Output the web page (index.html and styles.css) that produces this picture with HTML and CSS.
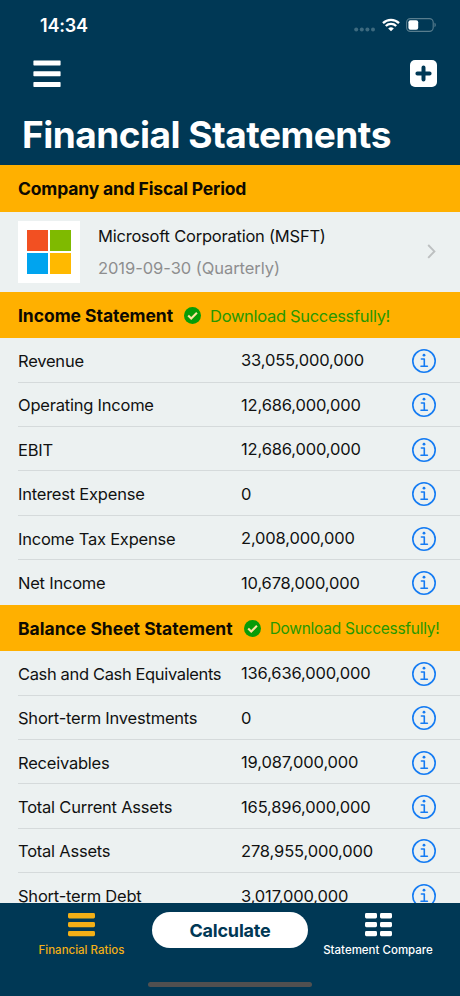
FILE: index.html
```html
<!DOCTYPE html>
<html lang="en">
<head>
    <meta charset="UTF-8">
    <meta name="viewport" content="width=device-width, initial-scale=1.0">
    <title>Financial Statements</title>
    <link rel="stylesheet" href="styles.css">
</head>
<body>
    <svg class="sprite">
        <symbol id="info" viewBox="0 0 24 24">
            <circle cx="12" cy="12" r="11.2" fill="none" stroke="currentColor" stroke-width="1.6"/>
            <circle cx="12" cy="6.2" r="1.4" fill="currentColor"/>
            <path d="M9.4 10h2.9v7.2M9 17.2h6.4" fill="none" stroke="currentColor" stroke-width="1.6" stroke-linecap="round" stroke-linejoin="round"/>
        </symbol>
        <symbol id="check" viewBox="0 0 17 17">
            <circle cx="8.5" cy="8.5" r="8.5" fill="#079c07"/>
            <path d="M4.2 8.6l3 3 5.7-5.8" fill="none" stroke="#ffe3a0" stroke-width="2.1"/>
        </symbol>
    </svg>

    <div class="app">
        <header>
            <div class="status-bar">
                <span class="time">14:34</span>
                <div class="status-icons">
                    <svg class="dots" width="22" height="5" viewBox="0 0 22 5" fill="#3d6a7f"><circle cx="2.2" cy="2.5" r="2"/><circle cx="7.8" cy="2.5" r="2"/><circle cx="13.4" cy="2.5" r="2"/><circle cx="19" cy="2.5" r="2"/></svg>
                    <svg class="wifi" width="18" height="14" viewBox="0 0 18 14" fill="none" stroke="#fff" stroke-width="2.3"><path d="M1 5.1a11.4 11.4 0 0 1 16 0M3.8 8a7.4 7.4 0 0 1 10.4 0"/><path d="M9 13.3L6.2 10.5a4 4 0 0 1 5.6 0z" fill="#fff" stroke="none"/></svg>
                    <svg class="battery" width="31" height="14" viewBox="0 0 31 14"><rect x=".6" y=".6" width="26.6" height="12.8" rx="3.8" fill="none" stroke="#587d8e" stroke-width="1.1"/><rect x="2.4" y="2.3" width="9.8" height="9.4" rx="2" fill="#fff"/><path d="M28.5 4.8c1.7.6 1.7 3.8 0 4.4z" fill="#587d8e"/></svg>
                </div>
            </div>
            <div class="toolbar">
                <svg width="28" height="28" viewBox="0 0 28 28" fill="#fff"><rect x=".4" y=".4" width="27.2" height="5" rx=".7"/><rect x=".4" y="11.2" width="27.2" height="5" rx=".7"/><rect x=".4" y="22" width="27.2" height="5" rx=".7"/></svg>
                <svg width="27" height="27" viewBox="0 0 27 27"><rect width="27" height="27" rx="5" fill="#fff"/><path d="M13.5 7.4v12.2M7.4 13.5h12.2" stroke="#003855" stroke-width="4" stroke-linecap="round"/></svg>
            </div>
            <h1>Financial Statements</h1>
        </header>

        <main>
            <div class="section-title"><h2 class="period">Company and Fiscal Period</h2></div>
            <div class="company">
                <div class="logo">
                    <svg width="44" height="44" viewBox="0 0 44 44"><path fill="#f25022" d="M0 0h21v21H0z"/><path fill="#7fba00" d="M23 0h21v21H23z"/><path fill="#00a4ef" d="M0 23h21v21H0z"/><path fill="#ffb900" d="M23 23h21v21H23z"/></svg>
                </div>
                <div class="company-info">
                    <p class="company-name">Microsoft Corporation (MSFT)</p>
                    <p class="company-date">2019-09-30 (Quarterly)</p>
                </div>
                <svg class="chevron" width="9" height="15" viewBox="0 0 9 15"><path d="M1.2 1l6.2 6.4L1.2 13.8" fill="none" stroke="#bdc0c1" stroke-width="1.9"/></svg>
            </div>

            <div class="section-title">
                <h2>Income Statement</h2>
                <svg class="check"><use href="#check"/></svg>
                <span class="status large">Download Successfully!</span>
            </div>
            <ul>
                <li><span class="name">Revenue</span><span class="value">33,055,000,000</span><svg class="info"><use href="#info"/></svg></li>
                <li><span class="name">Operating Income</span><span class="value">12,686,000,000</span><svg class="info"><use href="#info"/></svg></li>
                <li><span class="name">EBIT</span><span class="value">12,686,000,000</span><svg class="info"><use href="#info"/></svg></li>
                <li><span class="name">Interest Expense</span><span class="value">0</span><svg class="info"><use href="#info"/></svg></li>
                <li><span class="name">Income Tax Expense</span><span class="value">2,008,000,000</span><svg class="info"><use href="#info"/></svg></li>
                <li><span class="name">Net Income</span><span class="value">10,678,000,000</span><svg class="info"><use href="#info"/></svg></li>
            </ul>

            <div class="section-title balance">
                <h2>Balance Sheet Statement</h2>
                <svg class="check"><use href="#check"/></svg>
                <span class="status">Download Successfully!</span>
            </div>
            <ul>
                <li><span class="name long">Cash and Cash Equivalents</span><span class="value">136,636,000,000</span><svg class="info"><use href="#info"/></svg></li>
                <li><span class="name">Short-term Investments</span><span class="value">0</span><svg class="info"><use href="#info"/></svg></li>
                <li><span class="name">Receivables</span><span class="value">19,087,000,000</span><svg class="info"><use href="#info"/></svg></li>
                <li><span class="name">Total Current Assets</span><span class="value">165,896,000,000</span><svg class="info"><use href="#info"/></svg></li>
                <li><span class="name">Total Assets</span><span class="value">278,955,000,000</span><svg class="info"><use href="#info"/></svg></li>
                <li><span class="name">Short-term Debt</span><span class="value">3,017,000,000</span><svg class="info"><use href="#info"/></svg></li>
            </ul>
        </main>

        <footer>
            <nav>
                <a class="tab active">
                    <svg width="27" height="24" viewBox="0 0 27 24" fill="currentColor"><rect width="27" height="5.4" rx="1.4"/><rect y="9" width="27" height="5.2" rx="1.4"/><rect y="18" width="27" height="5.2" rx="1.4"/></svg>
                    <span>Financial Ratios</span>
                </a>
                <button>Calculate</button>
                <a class="tab compare">
                    <svg width="27" height="24" viewBox="0 0 27 24" fill="currentColor"><rect width="12" height="5.4" rx="1.4"/><rect x="15" width="12" height="5.4" rx="1.4"/><rect y="9" width="12" height="5.2" rx="1.4"/><rect x="15" y="9" width="12" height="5.2" rx="1.4"/><rect y="18" width="12" height="5.2" rx="1.4"/><rect x="15" y="18" width="12" height="5.2" rx="1.4"/></svg>
                    <span>Statement Compare</span>
                </a>
            </nav>
            <div class="home-indicator"></div>
        </footer>
    </div>
</body>
</html>
```
FILE: styles.css
```css
* {
    box-sizing: border-box;
}

body {
    margin: 0;
    font-family: Inter, "Liberation Sans", sans-serif;
    color: #111;
    background-color: #003855;
}

h1, h2, p, ul {
    margin: 0;
    padding: 0;
}

svg {
    display: block;
    flex: none;
}

.sprite {
    display: none;
}

.app {
    display: flex;
    flex-direction: column;
    height: 996px;
    overflow: hidden;
}

header {
    flex: none;
    height: 165px;
    color: #fff;
}

.status-bar {
    display: flex;
    justify-content: space-between;
    height: 60px;
    padding: 15px 23px 0 40px;
}

.time {
    font-size: 18px;
    line-height: 22px;
    font-weight: 600;
    letter-spacing: -0.2px;
}

.status-icons {
    display: flex;
    padding-top: 3px;
}

.dots {
    margin-top: 9px;
}

.wifi {
    margin-left: 6px;
}

.battery {
    margin-left: 6px;
}

.toolbar {
    display: flex;
    justify-content: space-between;
    padding: 0 23px 0 33px;
}

h1 {
    padding: 24px 0 0 22px;
    font-size: 37px;
    line-height: 46px;
    font-weight: 700;
    letter-spacing: -0.5px;
    white-space: nowrap;
}

main {
    flex: none;
    height: 738px;
    overflow: hidden;
    background-color: #ecf1f1;
}

.section-title {
    display: flex;
    align-items: center;
    height: 46.5px;
    padding: 1px 0 0 18px;
    background-color: #ffb000;
    white-space: nowrap;
}

.section-title.balance {
    padding-top: 2px;
}

h2 {
    font-size: 17.5px;
    line-height: 22px;
    font-weight: 700;
    letter-spacing: -0.05px;
    color: #0d0a02;
}

.period {
    letter-spacing: -0.16px;
}

.balance h2 {
    letter-spacing: 0;
}

.check {
    width: 17px;
    height: 17px;
    margin: 0 9px 0 11px;
}

.status {
    font-size: 15.5px;
    letter-spacing: -0.27px;
    color: #279800;
}

.status.large {
    font-size: 16.5px;
    letter-spacing: -0.32px;
}

.company {
    display: flex;
    align-items: center;
    height: 80.3px;
    padding: 0 24px 0 18px;
}

.logo {
    display: flex;
    align-items: center;
    justify-content: center;
    width: 62px;
    height: 62px;
    background-color: #fff;
}

.company-info {
    flex: 1;
    margin-left: 18px;
}

.company-name, .company-date {
    font-size: 16.5px;
    line-height: 32px;
}

.company-name {
    letter-spacing: -0.22px;
}

.company-date {
    letter-spacing: -0.05px;
    color: #8e8e8f;
}

ul {
    list-style: none;
}

li {
    display: flex;
    align-items: center;
    height: 44.4px;
    margin-left: 18px;
    padding: 2px 24px 0 0;
    border-bottom: 1px solid #d5dadb;
    font-size: 16.5px;
    white-space: nowrap;
}

li:last-child {
    border-bottom: none;
}

.name {
    width: 223px;
    letter-spacing: -0.22px;
}

.name.long {
    letter-spacing: -0.36px;
}

.value {
    flex: 1;
    padding-bottom: 1px;
    letter-spacing: -0.15px;
}

.info {
    width: 24px;
    height: 24px;
    color: #147bf3;
}

footer {
    flex: 1;
    background-color: #003855;
}

nav {
    display: flex;
    justify-content: space-between;
    padding-top: 9px;
}

.tab {
    display: flex;
    flex-direction: column;
    align-items: center;
    width: 152px;
    padding-top: 1px;
    font-size: 11.5px;
    line-height: 14px;
    font-weight: 500;
    color: #fff;
}

.tab span {
    margin-top: 6px;
    white-space: nowrap;
}

.tab.active {
    padding-left: 11px;
    color: #f3af16;
}

.tab.compare {
    padding-right: 12px;
}

button {
    width: 156px;
    height: 36px;
    padding: 0;
    border: none;
    border-radius: 18px;
    background-color: #fff;
    color: #003855;
    font-family: inherit;
    font-size: 18px;
    font-weight: 700;
    letter-spacing: -0.2px;
}

.home-indicator {
    width: 164px;
    height: 5px;
    margin: 24.5px auto 0;
    border-radius: 3px;
    background-color: #505050;
}
```
